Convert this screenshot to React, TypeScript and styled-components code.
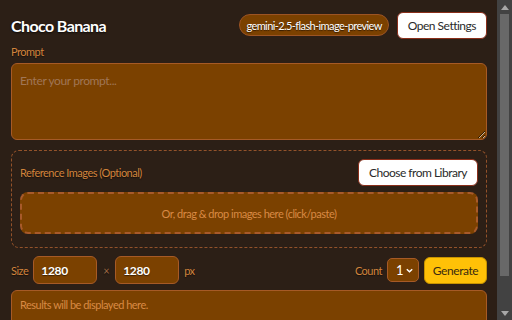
import styled, { createGlobalStyle } from 'styled-components';

const GlobalStyle = createGlobalStyle`
  body {
    margin: 0;
    background: #2c1f16;
    font-family: Lato, 'Noto Sans', sans-serif;
    letter-spacing: -0.5px;
    color: #f5e6d6;
  }
  * {
    box-sizing: border-box;
  }
`;

const Viewport = styled.div`
  display: flex;
  height: 320px;
  overflow: hidden;
`;

const Page = styled.div`
  flex: 1;
  display: flex;
  flex-direction: column;
  padding: 11px 10px 12px 11px;
  & > * {
    flex-shrink: 0;
  }
`;

const ScrollTrack = styled.div`
  width: 15px;
  display: flex;
  flex-direction: column;
  align-items: center;
  background: #424242;
`;

const ScrollArrow = styled.div<{ $down?: boolean }>`
  height: 14px;
  display: flex;
  align-items: center;
  justify-content: center;
  svg {
    transform: ${(p) => (p.$down ? 'rotate(180deg)' : 'none')};
  }
`;

const ScrollThumb = styled.div`
  width: 9px;
  height: 262px;
  background: #686868;
`;

const Header = styled.div`
  display: flex;
  align-items: center;
  justify-content: space-between;
  height: 28px;
`;

const Title = styled.h1`
  margin: 0;
  font-size: 16px;
  font-weight: 700;
  letter-spacing: -0.6px;
  color: #ffffff;
  text-shadow: 0 1px 2px rgba(0, 0, 0, 0.7);
`;

const HeaderRight = styled.div`
  display: flex;
  align-items: center;
  gap: 8px;
`;

const ModelPill = styled.span`
  display: inline-flex;
  align-items: center;
  height: 22px;
  padding: 0 6px;
  border-radius: 11px;
  background: #7b4100;
  border: 1px solid #9c5424;
  color: #ffffff;
  font-size: 11px;
  letter-spacing: -0.6px;
  text-shadow: 0 1px 1px rgba(0, 0, 0, 0.6);
`;

const WhiteButton = styled.button`
  height: 27px;
  padding: 0 10px;
  border-radius: 6px;
  background: #ffffff;
  border: 1px solid #8a2e1a;
  color: #2a2a2a;
  font-family: inherit;
  font-size: 12px;
  letter-spacing: -0.5px;
`;

const Label = styled.div`
  margin-top: 6px;
  line-height: 14px;
  font-size: 11px;
  color: #d2843c;
  text-shadow: 0 1px 1px rgba(0, 0, 0, 0.5);
`;

const PromptArea = styled.textarea`
  margin-top: 4px;
  height: 77px;
  resize: vertical;
  border-radius: 6px;
  background: #7b4100;
  border: 1px solid #a65a26;
  padding: 9px 8px;
  color: #ffffff;
  font-family: inherit;
  font-size: 12px;
  letter-spacing: -0.4px;
  &::placeholder {
    color: #a07656;
  }
`;

const RefBox = styled.div`
  margin-top: 10px;
  display: flex;
  flex-direction: column;
  gap: 6px;
  padding: 8px 8px 13px 8px;
  border: 1px dashed #93522a;
  border-radius: 8px;
`;

const RefHeader = styled.div`
  display: flex;
  align-items: center;
  justify-content: space-between;
`;

const RefLabel = styled.span`
  font-size: 11px;
  color: #d2843c;
  text-shadow: 0 1px 1px rgba(0, 0, 0, 0.5);
`;

const DropZone = styled.div`
  height: 42px;
  display: flex;
  align-items: center;
  justify-content: center;
  background: #7b4100;
  border: 2px dashed #a85a2a;
  border-radius: 8px;
  font-size: 11px;
  color: #d98a44;
`;

const Controls = styled.div`
  margin-top: 8px;
  display: flex;
  align-items: center;
  height: 28px;
`;

const Group = styled.div`
  display: flex;
  align-items: center;
  gap: 5px;
`;

const Spacer = styled.div`
  flex: 1;
`;

const SmallLabel = styled.span<{ $dim?: boolean }>`
  font-size: 11px;
  color: ${(p) => (p.$dim ? '#a06a44' : '#d2843c')};
  text-shadow: 0 1px 1px rgba(0, 0, 0, 0.5);
`;

const Times = styled(SmallLabel)`
  margin: 0 1px;
`;

const NumberInput = styled.input`
  width: 64px;
  height: 28px;
  padding: 0 7px;
  background: #7b4100;
  border: 1px solid #a65a26;
  border-radius: 6px;
  color: #ffffff;
  font-family: inherit;
  font-size: 12px;
  font-weight: 700;
  letter-spacing: -0.3px;
  text-shadow: 0 1px 1px rgba(0, 0, 0, 0.5);
  &::-webkit-inner-spin-button {
    display: none;
  }
`;

const CountSelect = styled.div`
  width: 32px;
  height: 24px;
  display: flex;
  align-items: center;
  justify-content: space-between;
  padding: 0 4px 0 8px;
  background: #7b4100;
  border: 1px solid #a65a26;
  border-radius: 5px;
  color: #ffffff;
  font-size: 13px;
`;

const GenerateButton = styled.button`
  height: 27px;
  width: 63px;
  padding: 0;
  background: #ffc107;
  border: 1px solid #c99400;
  border-radius: 6px;
  color: #3a2a10;
  font-family: inherit;
  font-size: 12px;
  letter-spacing: -0.4px;
`;

const Results = styled.div`
  margin-top: 6px;
  min-height: 54px;
  padding: 7px 8px;
  background: #7b4100;
  border: 1px solid #a65a26;
  border-radius: 6px;
  font-size: 11px;
  color: #d98a44;
`;

const Arrow = () => (
  <svg width="8" height="5" viewBox="0 0 8 5">
    <path d="M0 5 L4 0 L8 5 Z" fill="#a8a8a8" />
  </svg>
);

export default function App() {
  return (
    <Viewport>
      <GlobalStyle />
      <Page>
        <Header>
          <Title>Choco Banana</Title>
          <HeaderRight>
            <ModelPill>gemini-2.5-flash-image-preview</ModelPill>
            <WhiteButton>Open Settings</WhiteButton>
          </HeaderRight>
        </Header>
        <Label>Prompt</Label>
        <PromptArea placeholder="Enter your prompt..." />
        <RefBox>
          <RefHeader>
            <RefLabel>Reference Images (Optional)</RefLabel>
            <WhiteButton>Choose from Library</WhiteButton>
          </RefHeader>
          <DropZone>Or, drag &amp; drop images here (click/paste)</DropZone>
        </RefBox>
        <Controls>
          <Group>
            <SmallLabel>Size</SmallLabel>
            <NumberInput type="number" defaultValue={1280} />
            <Times $dim>×</Times>
            <NumberInput type="number" defaultValue={1280} />
            <SmallLabel>px</SmallLabel>
          </Group>
          <Spacer />
          <Group>
            <SmallLabel>Count</SmallLabel>
            <CountSelect>
              1
              <svg width="9" height="9" viewBox="0 0 10 10">
                <path d="M2 3.5 L5 6.5 L8 3.5" fill="none" stroke="#ffffff" strokeWidth="1.6" />
              </svg>
            </CountSelect>
            <GenerateButton>Generate</GenerateButton>
          </Group>
        </Controls>
        <Results>Results will be displayed here.</Results>
      </Page>
      <ScrollTrack>
        <ScrollArrow>
          <Arrow />
        </ScrollArrow>
        <ScrollThumb />
        <Spacer />
        <ScrollArrow $down>
          <Arrow />
        </ScrollArrow>
      </ScrollTrack>
    </Viewport>
  );
}
